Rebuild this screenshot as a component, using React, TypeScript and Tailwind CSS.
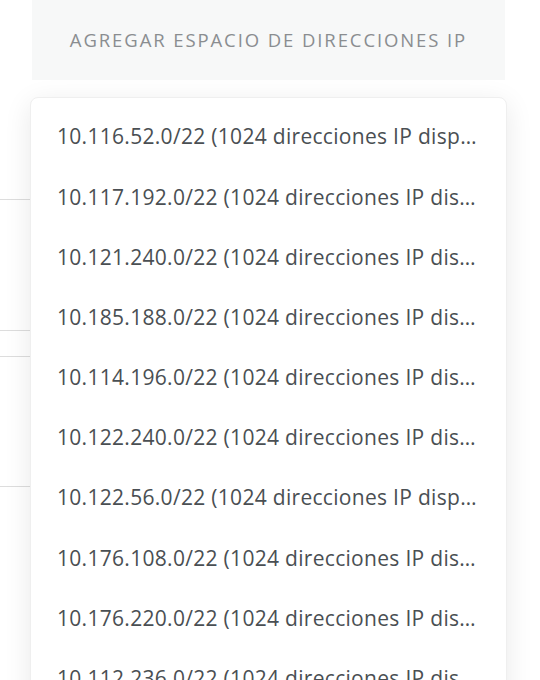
const ranges = [
  "10.116.52.0/22",
  "10.117.192.0/22",
  "10.121.240.0/22",
  "10.185.188.0/22",
  "10.114.196.0/22",
  "10.122.240.0/22",
  "10.122.56.0/22",
  "10.176.108.0/22",
  "10.176.220.0/22",
  "10.112.236.0/22",
];

export default function App() {
  return (
    <div
      className="relative h-[680px] w-[540px] overflow-hidden bg-white"
      style={{ fontFamily: "'Open Sans', 'Noto Sans', sans-serif" }}
    >
      <div className="mx-[32px] flex h-[80px] w-[473px] items-center justify-center bg-[#f7f8f8]">
        <span className="text-[18.5px] tracking-[1.9px] text-[#8a8d90] uppercase">
          Agregar espacio de direcciones IP
        </span>
      </div>

      {/* content underneath the menu */}
      <div className="w-[480px]">
        <div className="h-[120px] border-b border-[#dddddd]" />
        <div className="h-[131px] border-b border-[#dddddd]" />
        <div className="h-[26px] border-b border-[#dddddd]" />
        <div className="h-[130px] border-b border-[#dddddd]" />
      </div>

      <div className="absolute top-[97px] left-[30px] w-[477px] rounded-lg border border-[#efefef] bg-white pt-[9px] shadow-[0_6px_28px_rgba(0,0,0,0.09)]">
        {ranges.map((r) => (
          <div
            key={r}
            className="flex h-[60.2px] items-center pr-[26px] pl-[26px] text-[21px] tracking-[0.3px] text-[#4a4f53]"
          >
            <span className="truncate">{r} (1024 direcciones IP disponibles)</span>
          </div>
        ))}
      </div>
    </div>
  );
}
